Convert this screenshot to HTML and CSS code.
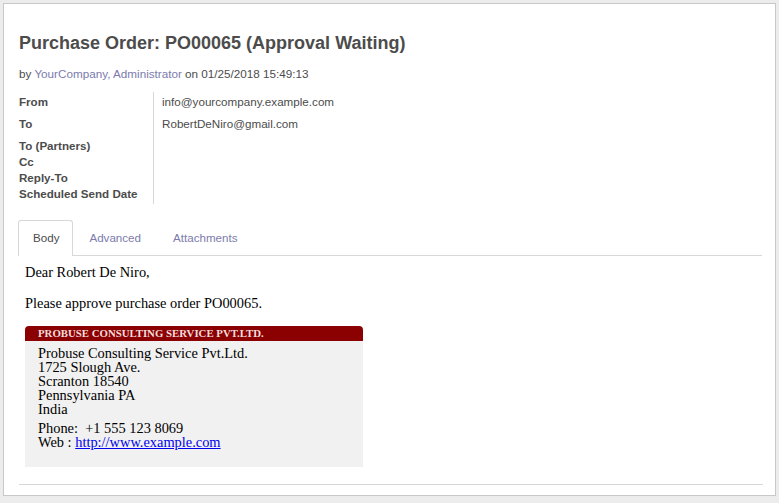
FILE: index.html
```html
<!DOCTYPE html>
<html>
<head>
<meta charset="utf-8">
<link rel="stylesheet" href="styles.css">
</head>
<body>
<div class="sheet">
  <h1 class="title">Purchase Order: PO00065 (Approval Waiting)</h1>
  <div class="meta">by <a class="lnk">YourCompany, Administrator</a> on 01/25/2018 15:49:13</div>
  <div class="fields">
    <div class="labels">
      <div class="lab tall">From</div>
      <div class="lab tall">To</div>
      <div class="lab">To (Partners)</div>
      <div class="lab">Cc</div>
      <div class="lab">Reply-To</div>
      <div class="lab">Scheduled Send Date</div>
    </div>
    <div class="values">
      <div class="val">info@yourcompany.example.com</div>
      <div class="val">RobertDeNiro@gmail.com</div>
    </div>
  </div>
  <div class="tabs">
    <div class="tab active">Body</div>
    <div class="tab">Advanced</div>
    <div class="tab">Attachments</div>
  </div>
  <div class="body">
    <p class="para">Dear Robert De Niro,</p>
    <p class="para">Please approve purchase order PO00065.</p>
    <div class="card">
      <div class="card-head">PROBUSE CONSULTING SERVICE PVT.LTD.</div>
      <div class="card-body">
        <div class="addr">Probuse Consulting Service Pvt.Ltd.<br>1725 Slough Ave.<br>Scranton 18540<br>Pennsylvania PA<br>India</div>
        <div class="contact">Phone:&nbsp; +1 555 123 8069<br>Web : <a class="web" href="#">http://www.example.com</a></div>
      </div>
    </div>
  </div>
  <div class="rule"></div>
</div>
</body>
</html>
```

FILE: styles.css
```css
html, body {
  margin: 0;
  padding: 0;
}
body {
  background: #ececec;
  padding: 3px 3px 0 3px;
  height: 503px;
  box-sizing: border-box;
  font-family: "Liberation Sans", Arial, sans-serif;
}
.sheet {
  background: #fff;
  border: 1px solid #c8c8c8;
  height: 493px;
  box-sizing: border-box;
  padding: 0 14px 0 14px;
  display: flex;
  flex-direction: column;
}
.title {
  margin: 29px 0 0 1px;
  font-size: 18px;
  line-height: 20px;
  font-weight: bold;
  color: #4c4c4c;
}
.meta {
  margin: 14px 0 0 1px;
  font-size: 11.7px;
  line-height: 14px;
  color: #4c4c4c;
}
.lnk {
  color: #7c7bad;
  text-decoration: none;
}
.fields {
  display: flex;
  margin: 11px 0 0 1px;
}
.labels {
  width: 134px;
  border-right: 1px solid #d8d8d8;
  padding-top: 2px;
  padding-bottom: 2px;
}
.lab {
  font-size: 11.6px;
  font-weight: bold;
  color: #4c4c4c;
  line-height: 16px;
}
.lab.tall {
  height: 22px;
}
.values {
  padding-left: 8px;
  padding-top: 2px;
}
.val {
  font-size: 11.65px;
  color: #4c4c4c;
  line-height: 16px;
  height: 22px;
}
.tabs {
  display: flex;
  margin-top: 16px;
  border-bottom: 1px solid #d8d8d8;
  height: 35px;
  width: 744px;
  margin-left: 0;
}
.tab {
  padding: 0 15px 0 15px;
  font-size: 11.6px;
  line-height: 33px;
  color: #7c7bad;
  border: 1px solid transparent;
  border-bottom: none;
  border-radius: 3px 3px 0 0;
  margin-bottom: -1px;
}
.tab.active {
  color: #4c4c4c;
  background: #fff;
  border-color: #d8d8d8;
  padding: 0 13px 2px 14px;
}
.body {
  padding-left: 7px;
  font-family: "Liberation Serif", "Times New Roman", serif;
  color: #000;
}
.para {
  margin: 8px 0 0 0;
  font-size: 14.4px;
  line-height: 16px;
}
.para + .para {
  margin-top: 15px;
}
.card {
  margin-top: 15px;
  width: 338px;
}
.card-head {
  background: #8b0000;
  color: #f3dede;
  font-weight: bold;
  font-size: 10.8px;
  line-height: 15px;
  padding-left: 13px;
  border-radius: 4px 4px 0 0;
}
.card-body {
  background: #f1f1f1;
  padding: 5px 13px 18px 13px;
  font-size: 14.4px;
  line-height: 14px;
}
.contact {
  margin-top: 5px;
}
.web {
  color: #0000ee;
  text-decoration: underline;
}
.rule {
  margin: 17px 0 0 1px;
  width: 744px;
  border-top: 1px solid #d8d8d8;
}
```
